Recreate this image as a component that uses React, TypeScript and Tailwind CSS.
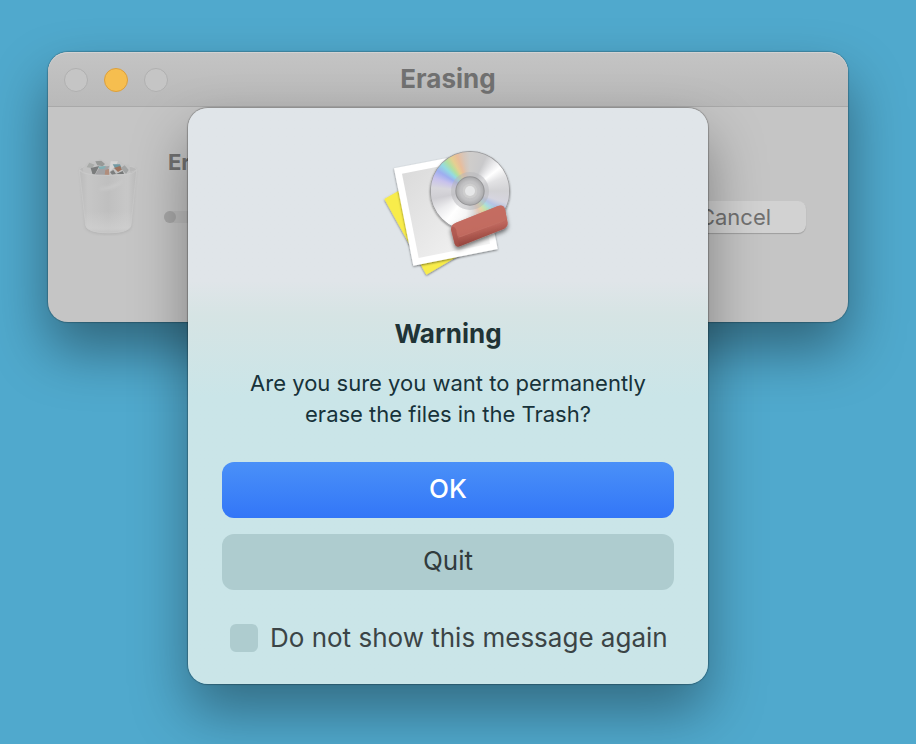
import { useState } from "react";

function TrashIcon() {
    return (
        <svg viewBox="48 50 192 240" className="mt-2 h-20 w-16 shrink-0" aria-hidden="true">
            <defs>
                <linearGradient id="can" x1="0" x2="1" y1="0" y2="0">
                    <stop offset="0" stopColor="#bababa" />
                    <stop offset="0.15" stopColor="#c6c6c6" />
                    <stop offset="0.5" stopColor="#bfbfbf" />
                    <stop offset="0.85" stopColor="#c8c8c8" />
                    <stop offset="1" stopColor="#bababa" />
                </linearGradient>
                <linearGradient id="canBase" x1="0" x2="0" y1="0" y2="1">
                    <stop offset="0.65" stopColor="#d2d2d2" stopOpacity="0" />
                    <stop offset="0.92" stopColor="#d2d2d2" stopOpacity="0.6" />
                    <stop offset="1" stopColor="#c2c2c2" />
                </linearGradient>
                <filter id="soften" x="-30%" y="-30%" width="160%" height="160%">
                    <feGaussianBlur stdDeviation="4" />
                </filter>
            </defs>
            <path d="M60 88 L228 88 L214 262 Q208 284 145 285 Q82 284 76 262Z" fill="#9a9a9a" filter="url(#soften)" opacity="0.45" />
            <ellipse cx="144" cy="90" rx="85" ry="14" fill="#b9b9b9" stroke="#cbcbcb" strokeWidth="2" />
            <path d="M68 88 L84 68 L106 66 L120 58 L138 68 L150 78 L158 64 L176 62 L190 74 L208 76 L212 106 L72 106Z" fill="#c2c2c2" />
            <path d="M88 70 L104 76 L96 86 L80 84Z" fill="#a9aba9" />
            <path d="M106 66 L124 64 L135 74 L128 81 L112 78Z" fill="#969896" />
            <path d="M92 86 L118 80 L104 106 L98 106Z" fill="#7a7c7c" />
            <path d="M120 82 L148 80 L138 108 L104 108Z" fill="#a2a2a4" />
            <path d="M114 82 L138 80 L132 88 L120 89Z" fill="#82b0b4" />
            <path d="M136 92 L147 88 L148 107 L134 107Z" fill="#b08d7c" />
            <path d="M152 66 L174 66 L168 78 L148 98Z" fill="#d4d4d4" />
            <path d="M158 75 L180 75 L184 84 L166 88Z" fill="#7199a2" />
            <path d="M162 86 L180 80 L187 90 L174 98Z" fill="#9c735f" />
            <path d="M150 98 L160 92 L168 104 L156 106Z" fill="#7c7e7e" />
            <path d="M182 86 L194 78 L206 92 L198 104Z" fill="#a2a4a4" />
            <path d="M168 104 L188 95 L192 104Z" fill="#757777" />
            <path d="M58 93 Q70 108 144 108 Q218 108 230 93 L213 259 Q208 280 145 281 Q82 280 77 259Z" fill="url(#can)" />
            <path d="M58 93 Q70 108 144 108 Q218 108 230 93 L213 259 Q208 280 145 281 Q82 280 77 259Z" fill="url(#canBase)" />
            <path d="M112 150 Q165 158 190 122 Q165 138 112 150Z" fill="#d4d4d4" opacity="0.5" filter="url(#soften)" />
            <path d="M58 93 Q70 108 144 108 Q218 108 230 93" fill="none" stroke="#cecece" strokeWidth="2" />
            <path d="M58 93 L77 259 Q82 280 145 281 Q208 280 213 259 L230 93" fill="none" stroke="#cbcbcb" strokeWidth="2" />
        </svg>
    );
}

function EraserIcon() {
    return (
        <svg viewBox="-6 0 480 450" className="h-[150px] w-40" aria-hidden="true">
            <defs>
                <linearGradient id="photo" x1="0" x2="1" y1="0" y2="1">
                    <stop offset="0" stopColor="#d9d9d9" />
                    <stop offset="1" stopColor="#f6f6f6" />
                </linearGradient>
                <linearGradient id="rubber" x1="0" x2="0.3" y1="0" y2="1">
                    <stop offset="0" stopColor="#c87166" />
                    <stop offset="0.65" stopColor="#bd665c" />
                    <stop offset="1" stopColor="#8e3f38" />
                </linearGradient>
                <radialGradient id="hub">
                    <stop offset="0" stopColor="#cfcfd1" />
                    <stop offset="0.7" stopColor="#c2c2c4" />
                    <stop offset="1" stopColor="#ababad" />
                </radialGradient>
                <filter id="drop" x="-20%" y="-20%" width="140%" height="150%">
                    <feDropShadow dx="0" dy="3" stdDeviation="3" floodOpacity="0.5" />
                </filter>
                <filter id="rubberDrop" x="-20%" y="-20%" width="140%" height="160%">
                    <feDropShadow dx="0" dy="8" stdDeviation="6" floodOpacity="0.55" />
                </filter>
            </defs>
            <path d="M43 192 L190 108 L312 335 L169 419Z" fill="#f8ec4c" filter="url(#drop)" />
            <path d="M72 100 L326 51 L383 342 L130 392Z" fill="#ffffff" filter="url(#drop)" />
            <path d="M96 116 L310 74 L360 326 L146 369Z" fill="url(#photo)" />
            <circle cx="300" cy="168" r="120" fill="#9b9b9d" filter="url(#drop)" />
            <foreignObject x="182" y="50" width="236" height="236">
                <div className="h-full w-full rounded-full bg-[conic-gradient(#cfcdcb_0deg,#c9c9cb_25deg,#ececee_42deg,#ffffff_52deg,#e2e2e4_68deg,#d2d2d5_90deg,#d6d5df_108deg,#b5c4e6_120deg,#a9dce0_130deg,#c6e3ae_140deg,#e7d4a4_149deg,#e5c9b8_158deg,#dedede_172deg,#f5f5f5_190deg,#ffffff_218deg,#ececee_238deg,#cfced3_258deg,#d8d7dc_275deg,#c8c2ec_290deg,#9eaef0_302deg,#93dbe2_313deg,#b2dfa0_322deg,#e6cf91_331deg,#e9bd9b_340deg,#d6c6ba_350deg,#cfcdcb_360deg)]" />
            </foreignObject>
            <circle cx="300" cy="168" r="57" fill="#b8b8bc" opacity="0.55" />
            <circle cx="300" cy="168" r="44" fill="#949496" />
            <circle cx="300" cy="168" r="41" fill="url(#hub)" />
            <circle cx="300" cy="168" r="22" fill="#d0d0d0" opacity="0.8" />
            <circle cx="300" cy="168" r="15" fill="#e6e7e8" />
            <g filter="url(#rubberDrop)">
                <path d="M258 263 L384 213 Q400 208 405 222 L413 262 Q415 274 403 281 L270 334 Q258 338 254 326 L243 283 Q241 270 258 263Z" fill="url(#rubber)" />
            </g>
            <path d="M258 263 L384 213 Q400 208 405 222 L409 246 Q407 255 398 259 L272 306 Q262 308 260 298 L248 276 Q250 267 258 263Z" fill="#c46e63" opacity="0.7" />
            <path d="M246 276 Q254 272 259 286 L267 332 Q258 337 254 326 L243 285Z" fill="#a9534b" opacity="0.6" />
            <path d="M265 307 L396 260 Q407 256 410 248" fill="none" stroke="#c6776c" strokeWidth="3" opacity="0.4" />
        </svg>
    );
}

function WarningDialog() {
    const [hideNextTime, setHideNextTime] = useState(false);

    return (
        <section
            role="alertdialog"
            aria-labelledby="warning-title"
            aria-describedby="warning-text"
            className="absolute top-14 left-1/2 flex w-[520px] -translate-x-1/2 flex-col rounded-[20px] bg-linear-to-b from-[#e0e5e9] from-30% via-[#d6e4e4] via-36% to-[#cae5e8] to-50% px-[34px] pt-[27px] pb-8 shadow-[0_0_1px_1px_rgba(0,0,0,0.25),0_28px_56px_rgba(0,0,0,0.36)]"
        >
            <div className="flex justify-center">
                <EraserIcon />
            </div>
            <h2 id="warning-title" className="mt-[33px] text-center text-[26px] leading-8 font-bold text-[#1f3336]">
                Warning
            </h2>
            <p id="warning-text" className="mt-[18px] text-center text-[22px] leading-[31px] text-[#17323a]">
                Are you sure you want to permanently
                <br />
                erase the files in the Trash?
            </p>
            <div className="mt-8 flex flex-col gap-4">
                <button type="button" className="h-14 rounded-xl bg-linear-to-b from-[#4a90f8] to-[#3376f7] pb-[3px] text-[26px] font-medium text-white">
                    OK
                </button>
                <button type="button" className="h-14 rounded-xl bg-[#aecccf] pb-[3px] text-[26px] text-[#313b3d]">
                    Quit
                </button>
            </div>
            <label className="mt-[34px] flex items-center gap-3 pl-2 text-[26px] leading-7 whitespace-nowrap text-[#3b4446]">
                <input
                    type="checkbox"
                    checked={hideNextTime}
                    onChange={(e) => setHideNextTime(e.target.checked)}
                    className="size-7 shrink-0 appearance-none rounded-md bg-[#aecccf] checked:bg-[#3376f7]"
                />
                Do not show this message again
            </label>
        </section>
    );
}

function App() {
    return (
        <main className="min-h-screen overflow-hidden bg-[#50a9cd] pt-[52px] pr-[68px] pb-[60px] pl-12 font-['Inter','Liberation_Sans',sans-serif]">
            <div className="relative rounded-[20px] bg-[#c5c5c5] shadow-[0_0_1px_1px_rgba(0,0,0,0.2),0_28px_56px_rgba(0,0,0,0.4)]">
                <header className="grid h-[55px] grid-cols-[1fr_auto_1fr] items-center rounded-t-[20px] border-b border-[#a9a9a9] bg-linear-to-b from-[#c4c4c4] to-[#b9b9b9] px-4 shadow-[inset_0_1px_0_rgba(255,255,255,0.25)]">
                    <div className="flex gap-4 pt-0.5">
                        <button type="button" aria-label="Close" className="size-6 rounded-full border border-[#b0b0b0] bg-[#c5c5c5]" />
                        <button type="button" aria-label="Minimize" className="size-6 rounded-full border border-[#dc9f3c] bg-[#f6be4f]" />
                        <button type="button" aria-label="Zoom" className="size-6 rounded-full border border-[#b0b0b0] bg-[#c5c5c5]" />
                    </div>
                    <h1 className="text-[26px] leading-8 font-bold text-[#717171]">Erasing</h1>
                </header>
                <div className="flex gap-6 pt-[41px] pr-[42px] pb-[86px] pl-7">
                    <TrashIcon />
                    <div className="grow">
                        <p className="pl-1 text-[22px] leading-7 font-bold text-[#717171]">Erasing</p>
                        <div className="mt-[25px] flex items-center gap-6">
                            <div role="progressbar" aria-label="Erasing" className="h-3 grow rounded-full bg-[#bcbcbc]">
                                <div className="size-3 rounded-full bg-[#a8a8a8]" />
                            </div>
                            <button type="button" className="h-8 w-[142px] rounded-lg bg-[#d2d2d2] text-[22px] leading-8 text-[#717171] shadow-[0_1px_1px_rgba(0,0,0,0.2)]">
                                Cancel
                            </button>
                        </div>
                    </div>
                </div>
                <WarningDialog />
            </div>
        </main>
    );
}

export default App;
